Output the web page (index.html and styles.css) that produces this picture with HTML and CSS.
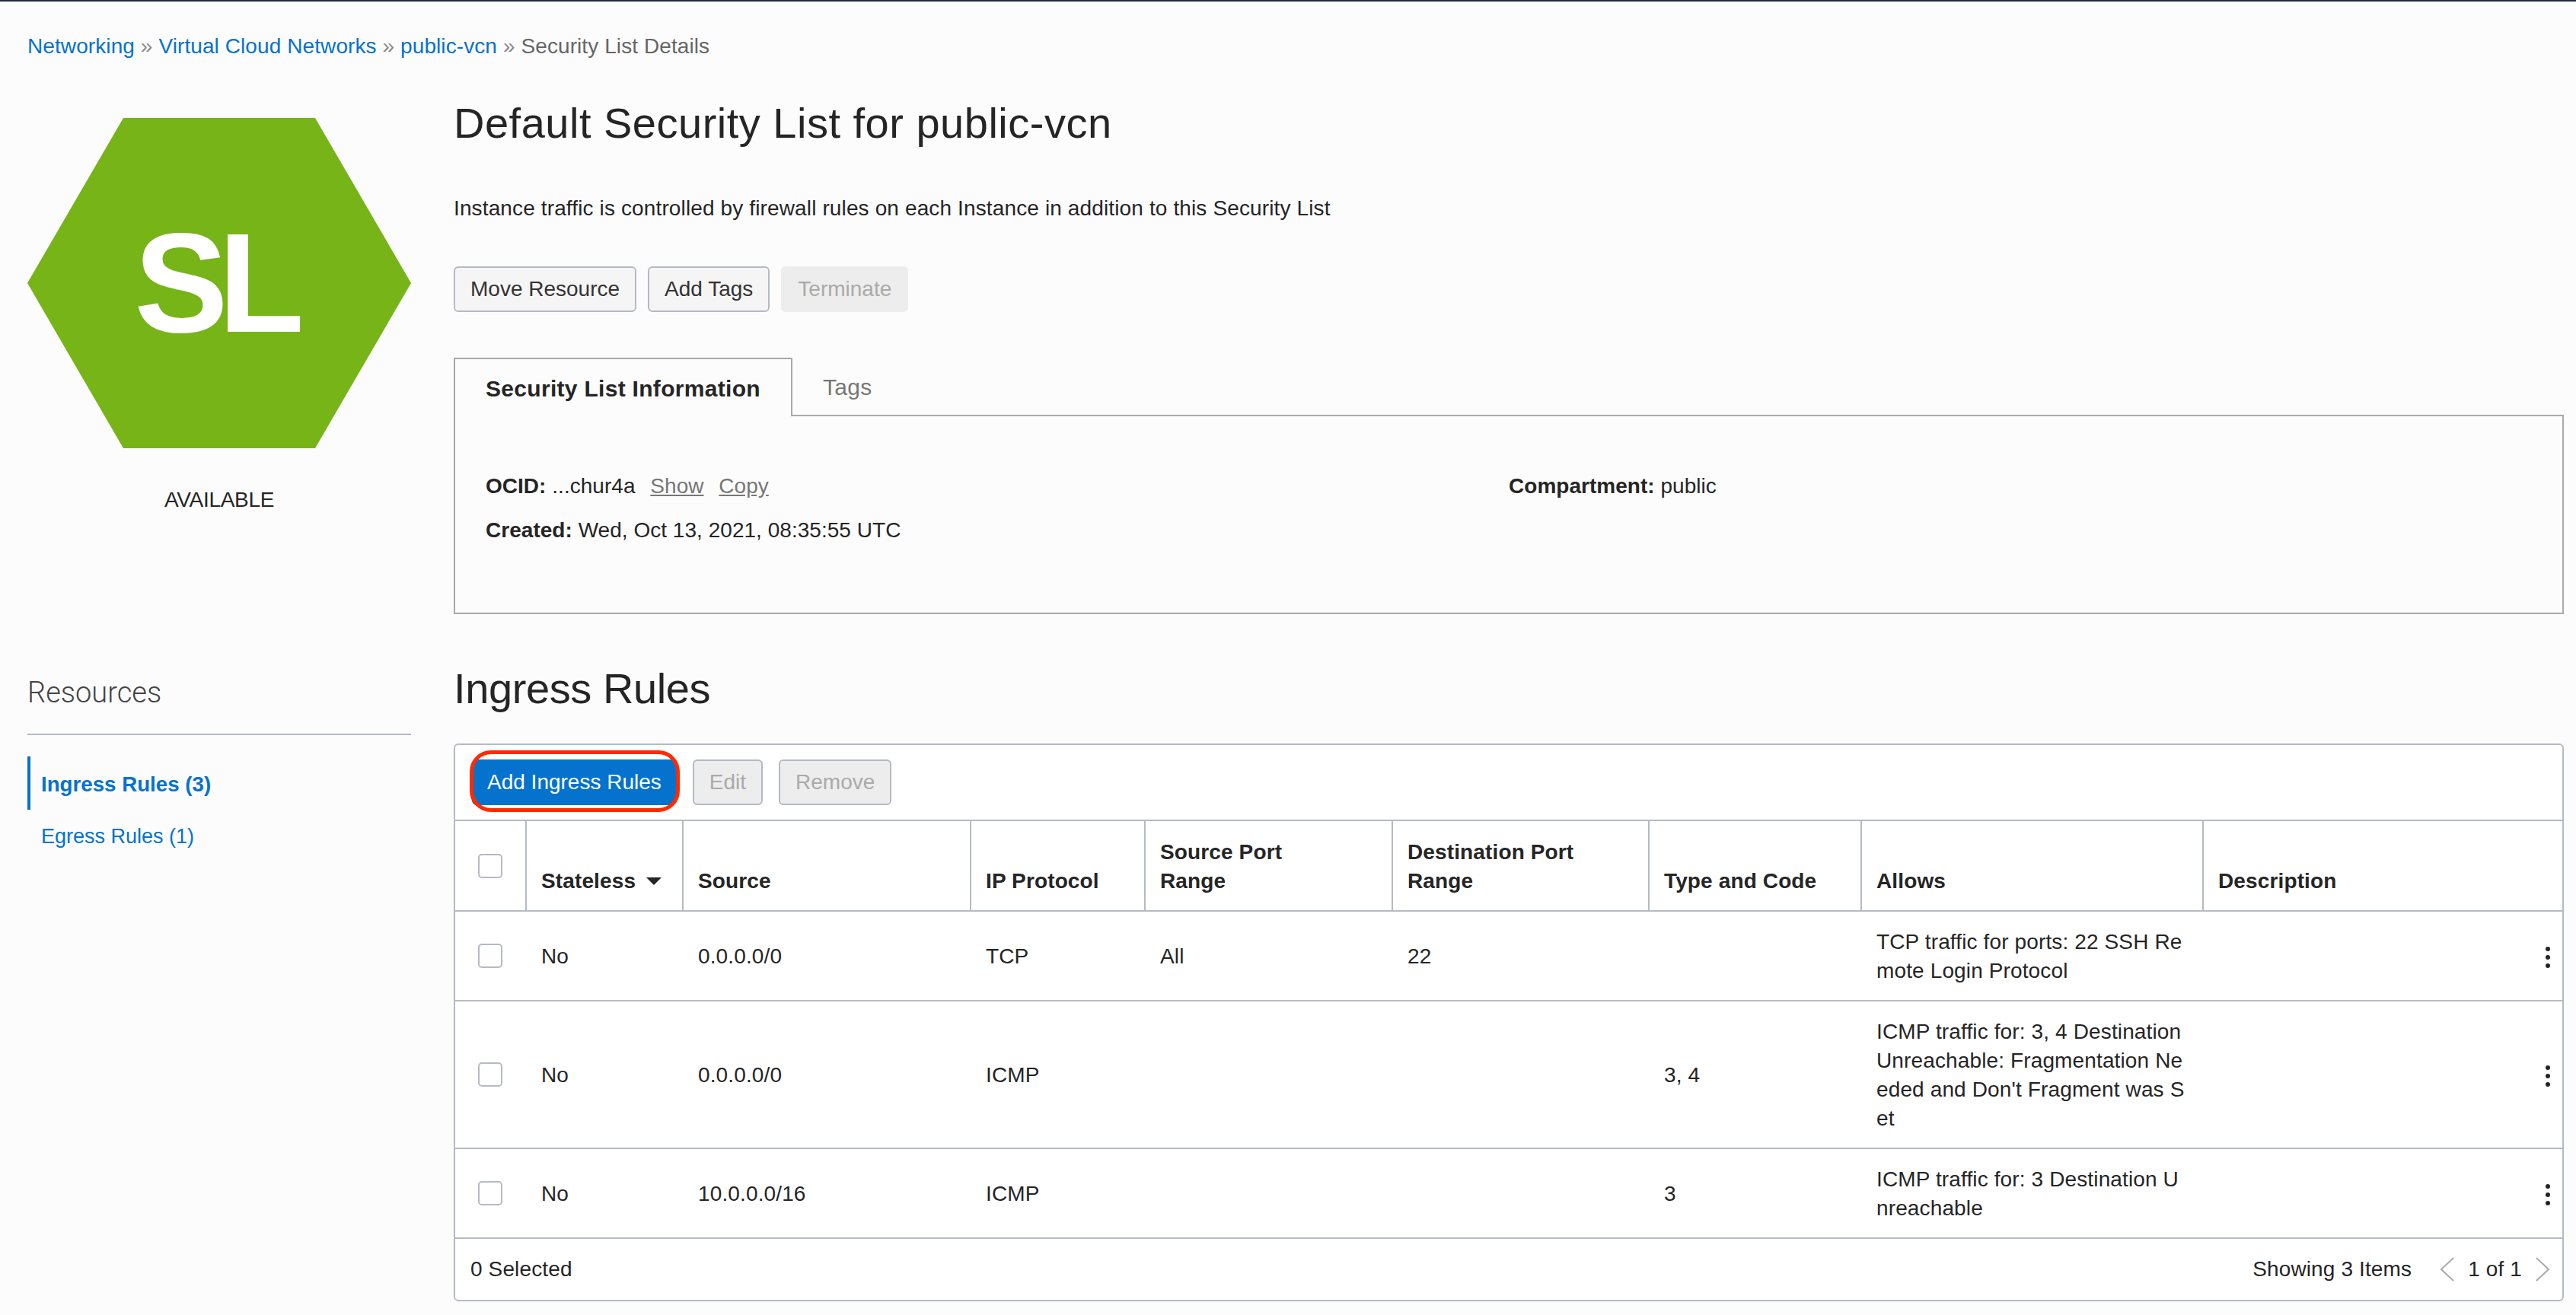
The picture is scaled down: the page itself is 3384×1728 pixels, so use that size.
FILE: index.html
```html
<!DOCTYPE html>
<html lang="en">
<head>
  <meta charset="UTF-8" />
  <title>Security List Details</title>
  <link rel="stylesheet" href="styles.css">
</head>
<body>
  <nav class="breadcrumb">
    <a href="#">Networking</a> <span class="sep">»</span>
    <a href="#">Virtual Cloud Networks</a> <span class="sep">»</span>
    <a href="#">public-vcn</a> <span class="sep">»</span>
    <span>Security List Details</span>
  </nav>

  <div class="page">
    <aside class="side">
      <div class="hexagon">SL</div>
      <div class="status">AVAILABLE</div>
      <h3 class="side-title">Resources</h3>
      <ul class="side-nav">
        <li class="active"><a href="#">Ingress Rules (3)</a></li>
        <li><a href="#">Egress Rules (1)</a></li>
      </ul>
    </aside>

    <main class="content">
      <h1>Default Security List for public-vcn</h1>
      <p class="intro">Instance traffic is controlled by firewall rules on each Instance in addition to this Security List</p>

      <div class="actions">
        <button class="btn">Move Resource</button>
        <button class="btn">Add Tags</button>
        <button class="btn btn-flat" disabled>Terminate</button>
      </div>

      <div class="tabs">
        <div class="tab active">Security List Information</div>
        <div class="tab">Tags</div>
      </div>
      <section class="info">
        <div class="info-col">
          <div><b>OCID:</b> ...chur4a <a class="info-link" href="#">Show</a> <a class="info-link" href="#">Copy</a></div>
          <div><b>Created:</b> Wed, Oct 13, 2021, 08:35:55 UTC</div>
        </div>
        <div class="info-col">
          <div><b>Compartment:</b> public</div>
        </div>
      </section>

      <h2>Ingress Rules</h2>

      <section class="rules">
        <div class="toolbar">
          <button class="btn btn-primary">Add Ingress Rules</button>
          <button class="btn btn-disabled" disabled>Edit</button>
          <button class="btn btn-disabled" disabled>Remove</button>
          <span class="callout"></span>
        </div>

        <table>
          <colgroup>
            <col class="c-check"><col class="c-stateless"><col class="c-source"><col class="c-proto"><col class="c-sport">
            <col class="c-dport"><col class="c-type"><col class="c-allows"><col>
          </colgroup>
          <thead>
            <tr>
              <th class="check"><span class="box"></span></th>
              <th>Stateless <span class="caret"></span></th>
              <th>Source</th>
              <th>IP Protocol</th>
              <th>Source Port<br>Range</th>
              <th>Destination Port<br>Range</th>
              <th>Type and Code</th>
              <th>Allows</th>
              <th>Description</th>
            </tr>
          </thead>
          <tbody>
            <tr>
              <td class="check"><span class="box"></span></td>
              <td>No</td>
              <td>0.0.0.0/0</td>
              <td>TCP</td>
              <td>All</td>
              <td>22</td>
              <td></td>
              <td class="allows">TCP traffic for ports: 22 SSH Remote Login Protocol</td>
              <td class="more"><span class="kebab"><i></i><i></i><i></i></span></td>
            </tr>
            <tr>
              <td class="check"><span class="box"></span></td>
              <td>No</td>
              <td>0.0.0.0/0</td>
              <td>ICMP</td>
              <td></td>
              <td></td>
              <td>3, 4</td>
              <td class="allows">ICMP traffic for: 3, 4 Destination Unreachable: Fragmentation Needed and Don't Fragment was Set</td>
              <td class="more"><span class="kebab"><i></i><i></i><i></i></span></td>
            </tr>
            <tr>
              <td class="check"><span class="box"></span></td>
              <td>No</td>
              <td>10.0.0.0/16</td>
              <td>ICMP</td>
              <td></td>
              <td></td>
              <td>3</td>
              <td class="allows">ICMP traffic for: 3 Destination Unreachable</td>
              <td class="more"><span class="kebab"><i></i><i></i><i></i></span></td>
            </tr>
          </tbody>
        </table>

        <div class="table-foot">
          <span>0 Selected</span>
          <div class="pager">
            <span class="count">Showing 3 Items</span>
            <svg class="chev" width="20" height="32" viewBox="0 0 20 32"><path d="M18 1 L2 16 L18 31"/></svg>
            <span class="pages">1 of 1</span>
            <svg class="chev" width="20" height="32" viewBox="0 0 20 32"><path d="M2 1 L18 16 L2 31"/></svg>
          </div>
        </div>
      </section>
    </main>
  </div>
</body>
</html>
```

FILE: styles.css
```css
:root {
  --line-color: #b5bac4;
  --text-color: #252525;
  --link-color: #0572ce;
  --muted-color: #aaaaaa;
}

* {
  box-sizing: border-box;
}

body {
  margin: 0;
  height: 1728px;
  overflow: hidden;
  border-top: 2px solid #1f2d3d;
  background-color: #fcfcfc;
  color: var(--text-color);
  font-family: "Liberation Sans", Arial, sans-serif;
  font-size: 28px;
  line-height: 38px;
  letter-spacing: 0.13px;
}

a {
  color: var(--link-color);
  text-decoration: none;
}

.breadcrumb {
  padding: 40px 0 0 36px;
  height: 77px;
  color: #666;
  letter-spacing: 0.09px;
}

.breadcrumb .sep {
  color: #888;
}

.page {
  display: flex;
  gap: 56px;
  margin-top: 50px;
  padding: 0 16px 0 36px;
}

/* left column */
.side {
  flex: 0 0 504px;
  padding-top: 26px;
}

.hexagon {
  display: flex;
  align-items: center;
  justify-content: center;
  height: 434px;
  padding-right: 13px;
  background-color: #76b418;
  clip-path: polygon(0 50%, 25% 0, 75% 0, 100% 50%, 75% 100%, 25% 100%);
  color: white;
  font-size: 185px;
  font-weight: bold;
  line-height: 1;
  letter-spacing: -13px;
}

.status {
  margin-top: 49px;
  text-align: center;
  letter-spacing: -0.3px;
}

.side-title {
  margin: 209px 0 0;
  padding-bottom: 29px;
  border-bottom: 2px solid var(--line-color);
  color: #444;
  font-family: Roboto, "Liberation Sans", sans-serif;
  font-size: 38px;
  font-weight: 300;
  line-height: 50px;
  letter-spacing: 0;
}

.side-nav {
  list-style: none;
  margin: 28px 0 0;
  padding: 0;
  font-size: 27px;
  letter-spacing: 0;
}

.side-nav li {
  height: 70px;
  padding: 16px 0 0 14px;
  border-left: 4px solid transparent;
}

.side-nav li.active {
  padding-top: 18px;
  border-left-color: var(--link-color);
  font-size: 27.7px;
  font-weight: bold;
}

/* right column */
.content {
  flex: 1;
  min-width: 0;
}

h1, h2 {
  margin: 0;
  font-size: 56px;
  font-weight: normal;
  line-height: 66px;
}

h1 {
  letter-spacing: 0.5px;
}

.intro {
  margin: 60px 0 0;
}

.actions {
  display: flex;
  gap: 15px;
  margin-top: 57px;
}

.btn {
  height: 60px;
  padding: 0 20px;
  border: 2px solid var(--line-color);
  border-radius: 6px;
  background: #f5f5f5;
  color: #333;
  font-family: inherit;
  font-size: 28px;
}

.btn-flat {
  border-color: #ededed;
  background: #ededed;
  color: var(--muted-color);
}

.btn-disabled {
  background: #ededed;
  color: var(--muted-color);
}

.btn-primary {
  padding: 0 18px;
  border-color: #0572ce;
  background: #0572ce;
  color: white;
}

.tabs {
  display: flex;
  margin-top: 60px;
  position: relative;
  z-index: 1;
}

.tab {
  height: 75px;
  padding: 20px 0 0 40px;
  color: #777;
  font-size: 30px;
  letter-spacing: 0.3px;
}

.tab.active {
  width: 445px;
  height: 77px;
  padding-left: 40px;
  border: 2px solid #aaa;
  border-bottom: 0;
  background-color: #fcfcfc;
  color: var(--text-color);
  font-weight: bold;
}

.info {
  display: flex;
  height: 262px;
  margin-top: -2px;
  padding: 73px 0 0 40px;
  border: 2px solid #aaa;
  letter-spacing: 0.03px;
}

.info-col {
  display: flex;
  flex-direction: column;
  gap: 20px;
  width: 1344px;
}

.info-link {
  margin-left: 12px;
  color: #777;
  text-decoration: underline;
}

h2 {
  margin-top: 65px;
  letter-spacing: -0.4px;
}

.rules {
  margin-top: 39px;
  height: 733px;
  border: 2px solid var(--line-color);
  border-radius: 6px;
  background-color: white;
}

.toolbar {
  position: relative;
  display: flex;
  gap: 21px;
  height: 100px;
  padding: 19px 0 0 22px;
  border-bottom: 2px solid var(--line-color);
}

/* red marker drawn over the screenshot */
.callout {
  position: absolute;
  left: 19px;
  top: 7px;
  width: 276px;
  height: 81px;
  border: 5px solid #ff2a00;
  border-radius: 28px;
}

table {
  width: 100%;
  border-collapse: separate;
  border-spacing: 0;
  table-layout: fixed;
}

.c-check { width: 94px; }
.c-stateless { width: 206px; }
.c-source { width: 378px; }
.c-proto { width: 229px; }
.c-sport { width: 325px; }
.c-dport { width: 337px; }
.c-type { width: 279px; }
.c-allows { width: 449px; }

th, td {
  padding: 21px 20px 19px 19px;
  border-bottom: 2px solid var(--line-color);
  text-align: left;
  vertical-align: middle;
}

th {
  padding: 22px 20px 19px 19px;
  border-right: 2px solid var(--line-color);
  vertical-align: bottom;
}

th:last-child {
  border-right: 0;
}

th.check {
  vertical-align: middle;
}

th.check, td.check {
  padding: 0 0 0 30px;
}

.box {
  display: block;
  width: 32px;
  height: 32px;
  border: 2px solid var(--line-color);
  border-radius: 5px;
  background: white;
}

.caret {
  display: inline-block;
  margin: 0 0 4px 6px;
  border-left: 10px solid transparent;
  border-right: 10px solid transparent;
  border-top: 10px solid var(--text-color);
}

.allows {
  word-break: break-all;
}

td.more {
  padding: 0 16px 0 0;
  text-align: right;
}

.kebab {
  display: inline-flex;
  flex-direction: column;
  gap: 5px;
  vertical-align: middle;
}

.kebab i {
  display: block;
  width: 6px;
  height: 6px;
  border-radius: 50%;
  background-color: var(--text-color);
}

.table-foot {
  display: flex;
  align-items: center;
  justify-content: space-between;
  height: 80px;
  padding: 0 16px 0 20px;
}

.pager {
  display: flex;
  align-items: center;
}

.chev {
  fill: none;
  stroke: var(--muted-color);
  stroke-width: 2;
}

.count {
  margin-right: 37px;
}

.pages {
  margin: 0 17px;
}
```
